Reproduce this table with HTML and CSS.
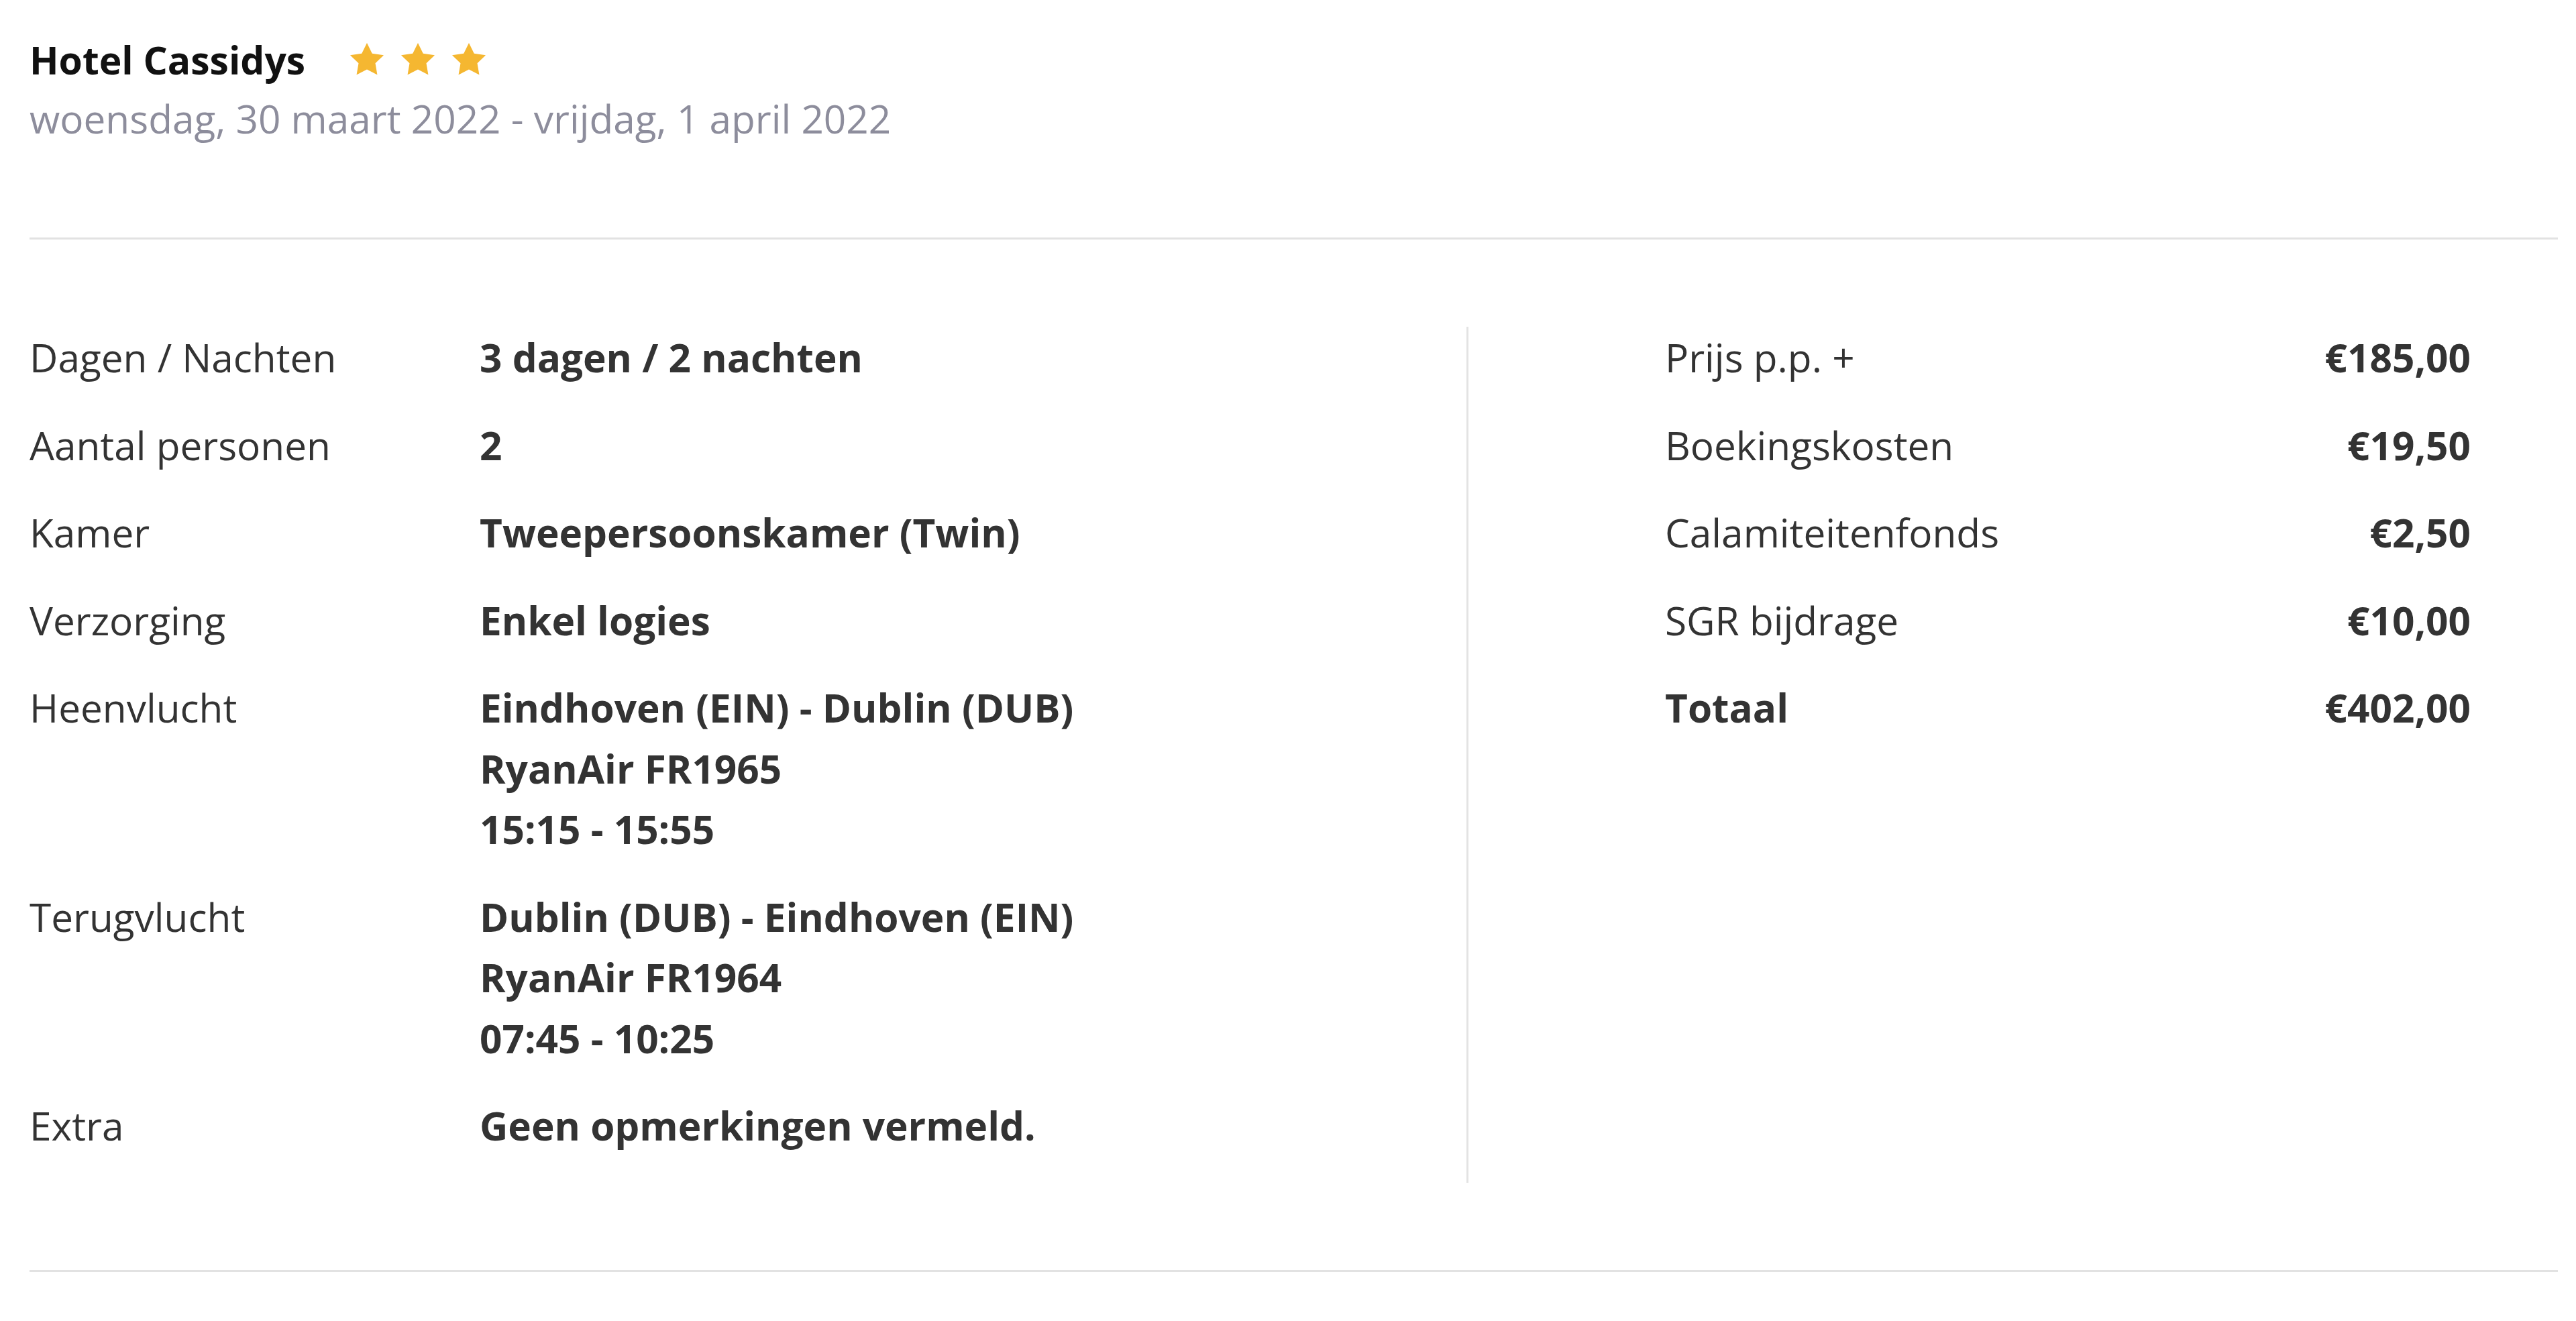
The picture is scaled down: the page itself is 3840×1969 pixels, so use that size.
FILE: index.html
```html
<!DOCTYPE html>
<html lang="nl">
<head>
<meta charset="utf-8">
<title>Hotel Cassidys</title>
<link rel="stylesheet" href="styles.css">
</head>
<body>
<div class="page">
  <header class="hotel">
    <div class="title-row">
      <h1 class="hotel-name">Hotel Cassidys</h1>
      <div class="stars">
        <svg class="star" viewBox="0 0 24 24"><path d="M12 2l3.09 6.26L22 9.27l-5 4.87 1.18 6.88L12 17.77l-6.18 3.25L7 14.14 2 9.27l6.91-1.01L12 2z"/></svg>
        <svg class="star" viewBox="0 0 24 24"><path d="M12 2l3.09 6.26L22 9.27l-5 4.87 1.18 6.88L12 17.77l-6.18 3.25L7 14.14 2 9.27l6.91-1.01L12 2z"/></svg>
        <svg class="star" viewBox="0 0 24 24"><path d="M12 2l3.09 6.26L22 9.27l-5 4.87 1.18 6.88L12 17.77l-6.18 3.25L7 14.14 2 9.27l6.91-1.01L12 2z"/></svg>
      </div>
    </div>
    <p class="dates">woensdag, 30 maart 2022 - vrijdag, 1 april 2022</p>
  </header>

  <div class="divider"></div>

  <section class="details">
    <div class="info">
      <div class="row"><div class="label">Dagen / Nachten</div><div class="value">3 dagen / 2 nachten</div></div>
      <div class="row"><div class="label">Aantal personen</div><div class="value">2</div></div>
      <div class="row"><div class="label">Kamer</div><div class="value">Tweepersoonskamer (Twin)</div></div>
      <div class="row"><div class="label">Verzorging</div><div class="value">Enkel logies</div></div>
      <div class="row"><div class="label">Heenvlucht</div><div class="value">Eindhoven (EIN) - Dublin (DUB)<br>RyanAir FR1965<br>15:15 - 15:55</div></div>
      <div class="row"><div class="label">Terugvlucht</div><div class="value">Dublin (DUB) - Eindhoven (EIN)<br>RyanAir FR1964<br>07:45 - 10:25</div></div>
      <div class="row"><div class="label">Extra</div><div class="value">Geen opmerkingen vermeld.</div></div>
    </div>
    <div class="prices">
      <div class="price-row"><span class="p-label">Prijs p.p. +</span><span class="p-value">€185,00</span></div>
      <div class="price-row"><span class="p-label">Boekingskosten</span><span class="p-value">€19,50</span></div>
      <div class="price-row"><span class="p-label">Calamiteitenfonds</span><span class="p-value">€2,50</span></div>
      <div class="price-row"><span class="p-label">SGR bijdrage</span><span class="p-value">€10,00</span></div>
      <div class="price-row total"><span class="p-label">Totaal</span><span class="p-value">€402,00</span></div>
    </div>
  </section>

  <div class="divider bottom"></div>
</div>
</body>
</html>
```

FILE: styles.css
```css
html, body {
  margin: 0;
  padding: 0;
  background: #ffffff;
}

body {
  font-family: "Open Sans", "Noto Sans", "Liberation Sans", sans-serif;
  color: #333333;
  font-size: 58.5px;
  line-height: 90.5px;
}

.page {
  padding: 46px 27px 60px 44px;
}

.title-row {
  display: flex;
  align-items: center;
  height: 86px;
}

.hotel-name {
  margin: 0;
  font-size: 57px;
  font-weight: 700;
  line-height: 86px;
  color: #111111;
}

.stars {
  display: flex;
  gap: 16px;
  margin-left: 62px;
}

.star {
  width: 60px;
  height: 60px;
  fill: #f5b731;
  display: block;
}

.dates {
  margin: 0;
  line-height: 88px;
  color: #8d8d9c;
}

.divider {
  height: 3px;
  background: #e2e2e2;
  margin-top: 134px;
}

.divider.bottom {
  margin-top: 130px;
}

.details {
  display: flex;
  margin-top: 130px;
}

.info {
  width: 2142px;
  border-right: 3px solid #e3e3e3;
}

.row {
  display: flex;
  margin-bottom: 40px;
}

.label {
  width: 671px;
  flex: none;
}

.value {
  font-weight: 700;
}

.prices {
  flex: 1;
  padding: 0 130px 0 293px;
}

.price-row {
  display: flex;
  justify-content: space-between;
  margin-bottom: 40px;
}

.p-value {
  font-weight: 700;
}

.price-row.total .p-label {
  font-weight: 700;
}
```
